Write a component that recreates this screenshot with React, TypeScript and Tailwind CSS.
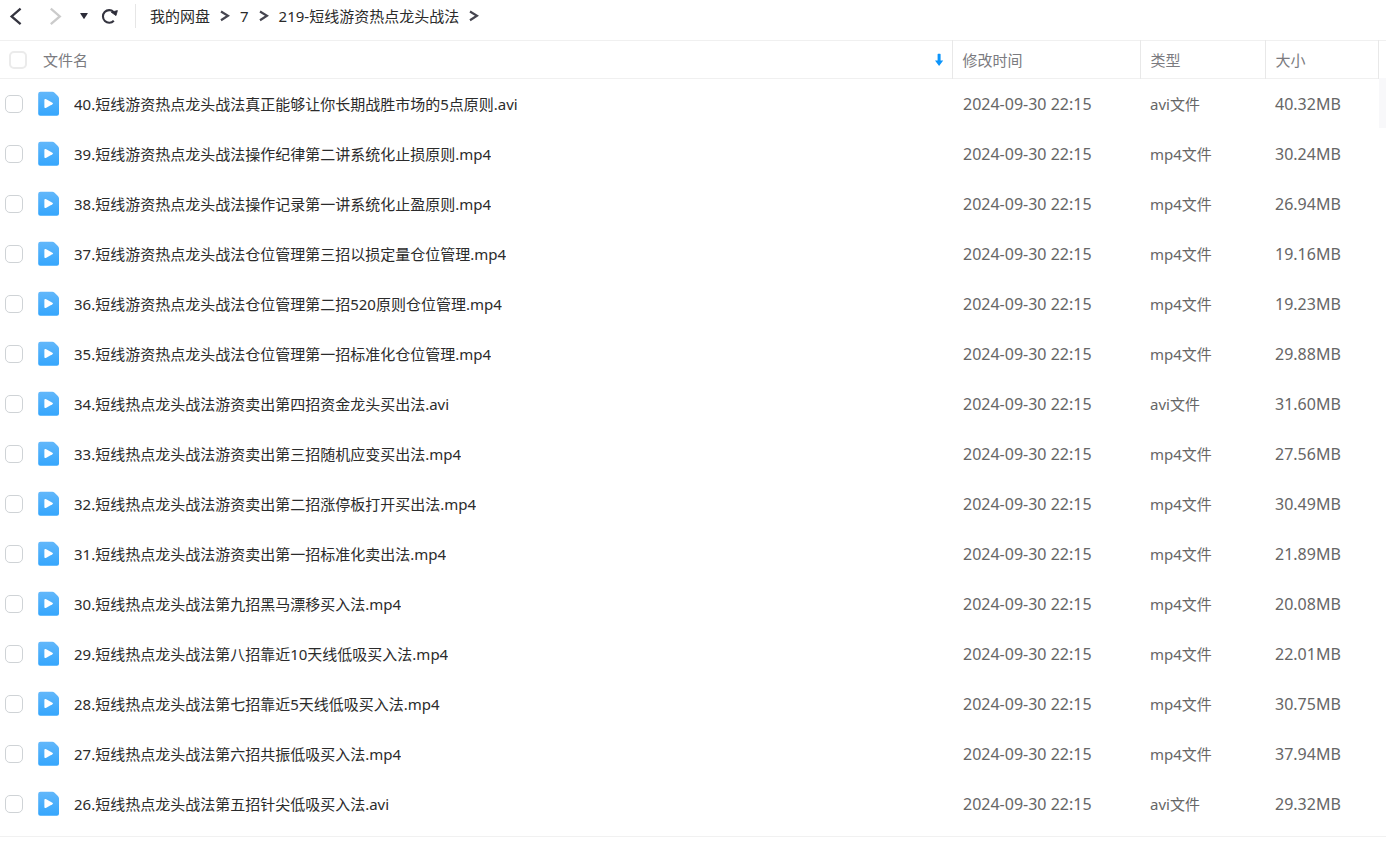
import React, { useState } from 'react';

interface FileItem {
  name: string;
  size: string;
}

const MODIFIED = '2024-09-30 22:15';

const FILES: FileItem[] = [
  { name: '40.短线游资热点龙头战法真正能够让你长期战胜市场的5点原则.avi', size: '40.32MB' },
  { name: '39.短线游资热点龙头战法操作纪律第二讲系统化止损原则.mp4', size: '30.24MB' },
  { name: '38.短线游资热点龙头战法操作记录第一讲系统化止盈原则.mp4', size: '26.94MB' },
  { name: '37.短线游资热点龙头战法仓位管理第三招以损定量仓位管理.mp4', size: '19.16MB' },
  { name: '36.短线游资热点龙头战法仓位管理第二招520原则仓位管理.mp4', size: '19.23MB' },
  { name: '35.短线游资热点龙头战法仓位管理第一招标准化仓位管理.mp4', size: '29.88MB' },
  { name: '34.短线热点龙头战法游资卖出第四招资金龙头买出法.avi', size: '31.60MB' },
  { name: '33.短线热点龙头战法游资卖出第三招随机应变买出法.mp4', size: '27.56MB' },
  { name: '32.短线热点龙头战法游资卖出第二招涨停板打开买出法.mp4', size: '30.49MB' },
  { name: '31.短线热点龙头战法游资卖出第一招标准化卖出法.mp4', size: '21.89MB' },
  { name: '30.短线热点龙头战法第九招黑马漂移买入法.mp4', size: '20.08MB' },
  { name: '29.短线热点龙头战法第八招靠近10天线低吸买入法.mp4', size: '22.01MB' },
  { name: '28.短线热点龙头战法第七招靠近5天线低吸买入法.mp4', size: '30.75MB' },
  { name: '27.短线热点龙头战法第六招共振低吸买入法.mp4', size: '37.94MB' },
  { name: '26.短线热点龙头战法第五招针尖低吸买入法.avi', size: '29.32MB' },
];

const CRUMBS = ['我的网盘', '7', '219-短线游资热点龙头战法'];

function CrumbArrow() {
  return (
    <svg width="10" height="12" viewBox="0 0 10 12" fill="none" stroke="#45454f" strokeWidth="2.2" aria-hidden="true">
      <path d="M1 1.5 8 5.8 1 10.2" />
    </svg>
  );
}

function VideoIcon() {
  return (
    <svg width="22" height="26" viewBox="0 0 22 26" className="shrink-0" aria-hidden="true">
      <defs>
        <linearGradient id="video-file" x1="0" y1="0" x2="0" y2="1">
          <stop offset="0" stopColor="#62b7fa" />
          <stop offset="1" stopColor="#35a6fd" />
        </linearGradient>
      </defs>
      <path d="M2.5 .8H14.2Q15.6 .8 16.6 1.8L19.9 5Q21 6.1 21 7.6V22.7Q21 24.8 18.9 24.8H2.3Q.2 24.8 .2 22.7V3Q.2 .8 2.5 .8Z" fill="url(#video-file)" />
      <path d="M6.4 9Q6.4 7.5 7.8 8.1L14.4 11.7Q15.8 12.5 14.4 13.3L7.8 16.9Q6.4 17.5 6.4 16Z" fill="#fff" />
    </svg>
  );
}

interface CheckProps {
  label: string;
  checked: boolean;
  muted?: boolean;
  onChange: () => void;
}

function Check({ label, checked, muted, onChange }: CheckProps) {
  return (
    <input
      type="checkbox"
      aria-label={label}
      checked={checked}
      onChange={onChange}
      className={`block size-[18px] shrink-0 appearance-none rounded-[5px] bg-white checked:border-[#2ea3fd] checked:bg-[#2ea3fd] ${
        muted ? 'border-2 border-[#ebebeb]' : 'border border-[#cfd3d6]'
      }`}
    />
  );
}

export default function App() {
  const [selected, setSelected] = useState<string[]>([]);
  const allSelected = selected.length === FILES.length;

  const toggle = (name: string) =>
    setSelected((prev) => (prev.includes(name) ? prev.filter((n) => n !== name) : [...prev, name]));

  return (
    <div className="min-h-screen bg-white font-['Noto_Sans','Noto_Sans_CJK_SC',sans-serif] text-[15px] leading-5 text-[#2b2b2b]">
      {/* Toolbar */}
      <header className="flex h-10 items-center pb-2 pl-2">
        <button aria-label="后退" className="flex w-10 items-center">
          <svg width="16" height="20" viewBox="0 0 16 20" fill="none" stroke="#34343f" strokeWidth="2.3">
            <path d="M12.6 2.6 3.6 10.4l9 7.8" />
          </svg>
        </button>
        <button aria-label="前进" className="flex w-8 items-center">
          <svg width="16" height="20" viewBox="0 0 16 20" fill="none" stroke="#cbcbcb" strokeWidth="2.3">
            <path d="M2.8 2.6l9 7.8-9 7.8" />
          </svg>
        </button>
        <button aria-label="历史记录" className="flex w-5 items-center">
          <svg width="8" height="6" viewBox="0 0 8 6" fill="#2c2c38">
            <path d="M.6 0h6.8q.6 0 .3.5L4.5 5.6q-.5.6-1 0L.3.5Q0 0 .6 0z" />
          </svg>
        </button>
        <button aria-label="刷新" className="flex w-[35px] items-center">
          <svg width="20" height="18" viewBox="0 0 20 18" fill="none">
            <path d="M13.8 13.8A6.3 6.3 0 1 1 13.6 4.9" stroke="#34343f" strokeWidth="2.1" />
            <path d="M11.2 5.2 17.4 3.6 16 8.6z" fill="#2c2c38" stroke="#2c2c38" strokeWidth=".8" strokeLinejoin="round" />
          </svg>
        </button>
        <nav aria-label="路径" className="flex h-6 items-center border-l border-[#e6e6e6] pl-3.5">
          {CRUMBS.map((crumb) => (
            <span key={crumb} className="flex items-center gap-2.5 pr-2.5">
              <a href="#">{crumb}</a>
              <CrumbArrow />
            </span>
          ))}
        </nav>
      </header>

      {/* File list */}
      <main className="relative border-b border-[#f1f1f1] pb-[7px]">
        <table className="w-full table-fixed border-collapse text-left">
          <colgroup>
            <col />
            <col className="w-[188px]" />
            <col className="w-[125px]" />
            <col className="w-[113px]" />
            <col className="w-2" />
          </colgroup>
          <thead>
            <tr className="h-[38px] border-y border-[#f0f0f0] text-[#7b7b80]">
              <th className="p-0 font-normal">
                <div className="flex items-center pr-2 pl-[9px]">
                  <Check
                    label="全选"
                    muted
                    checked={allSelected}
                    onChange={() => setSelected(allSelected ? [] : FILES.map((f) => f.name))}
                  />
                  <span className="ml-4 flex-1">文件名</span>
                  <svg width="10" height="14" viewBox="0 0 10 14" fill="#0d95fb" aria-hidden="true">
                    <path d="M3.6 1.2Q3.6.7 4.2.7H6Q6.6.7 6.6 1.2V7.4H9.2L5.1 13 1 7.4H3.6z" />
                  </svg>
                </div>
              </th>
              <th className="border-l border-[#e8e8e8] p-0 pl-2.5 font-normal">修改时间</th>
              <th className="border-l border-[#e8e8e8] p-0 pl-2.5 font-normal">类型</th>
              <th className="border-l border-[#e8e8e8] p-0 pl-2.5 font-normal">大小</th>
              <th className="border-l border-[#e8e8e8] p-0" />
            </tr>
          </thead>
          <tbody>
            {FILES.map((file) => (
              <tr key={file.name} className="h-[50px] text-[#666666]">
                <td className="p-0">
                  <div className="flex items-center pl-[5px]">
                    <Check label={file.name} checked={selected.includes(file.name)} onChange={() => toggle(file.name)} />
                    <span className="ml-[15px]">
                      <VideoIcon />
                    </span>
                    <span className="ml-3.5 truncate text-[#2b2b2b]">{file.name}</span>
                  </div>
                </td>
                <td className="p-0 pl-[11px] text-base">{MODIFIED}</td>
                <td className="p-0 pl-2.5">{file.name.split('.').pop()}文件</td>
                <td className="p-0 pl-2.5 text-base">{file.size}</td>
                <td className="p-0" />
              </tr>
            ))}
          </tbody>
        </table>
        {/* Scrollbar thumb */}
        <div className="absolute top-[38px] right-0 h-[50px] w-[7px] bg-[#f8f8fa]" />
      </main>
    </div>
  );
}
